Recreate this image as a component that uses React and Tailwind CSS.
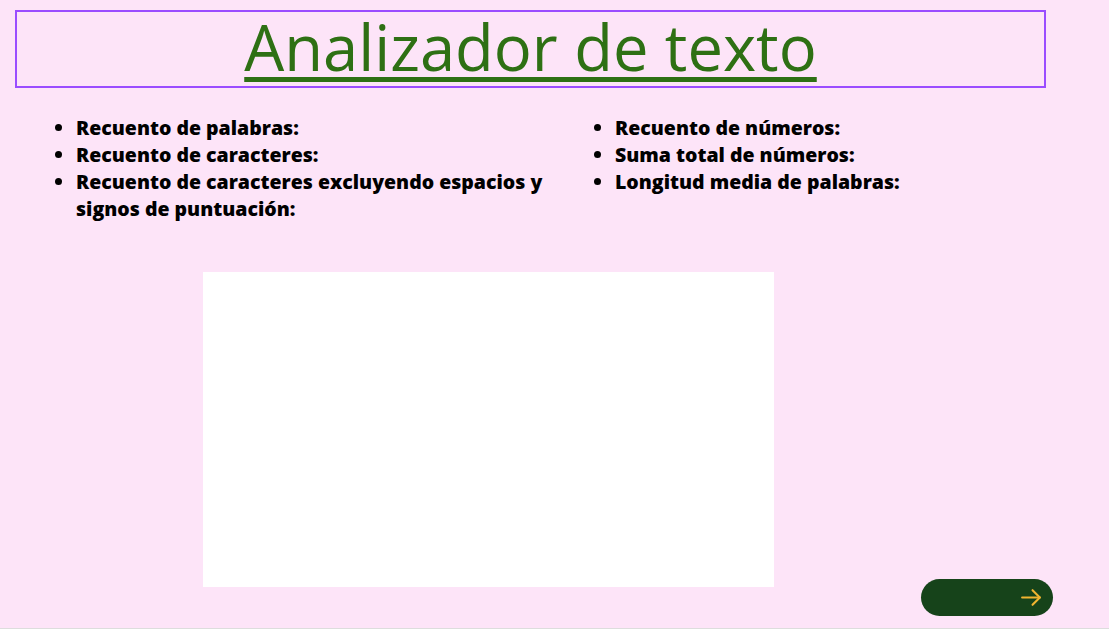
import React from "react";

export default function App() {
  return (
    <div
      className="h-[629px] w-full bg-[#fde4f8] border-b border-[#dddddd] overflow-hidden"
      style={{ fontFamily: '"Open Sans", sans-serif' }}
    >
      <div className="pt-[10px] pl-[15px]">
        <div className="w-[1031px] h-[78px] border-2 border-[#9a4cff] flex justify-center pt-[3px]">
          <h1 className="text-[63.3px] leading-[64px] text-[#2e7014] underline decoration-[5px] underline-offset-[6px] font-normal">
            Analizador de texto
          </h1>
        </div>
      </div>

      <div className="grid grid-cols-[539px_1fr] pl-[36px] mt-[26px] text-[19.5px] leading-[27px] font-extrabold text-black">
        <ul className="list-disc pl-[40px]">
          <li>Recuento de palabras:</li>
          <li>Recuento de caracteres:</li>
          <li>Recuento de caracteres excluyendo espacios y signos de puntuación:</li>
        </ul>
        <ul className="list-disc pl-[40px]">
          <li>Recuento de números:</li>
          <li>Suma total de números:</li>
          <li>Longitud media de palabras:</li>
        </ul>
      </div>

      <div className="flex items-start pl-[203px] mt-[50px]">
        <div className="w-[571px] h-[315px] bg-white" />
        <button className="ml-[147px] mt-[307px] w-[132px] h-[37px] rounded-full bg-[#16431a] flex items-center justify-end pr-[9px]">
          <svg width="25" height="25" viewBox="0 0 24 24" fill="none" stroke="#f0b430" strokeWidth="2" strokeLinecap="round" strokeLinejoin="round">
            <path d="M3 12h17" />
            <path d="M13 5l7 7-7 7" />
          </svg>
        </button>
      </div>
    </div>
  );
}
